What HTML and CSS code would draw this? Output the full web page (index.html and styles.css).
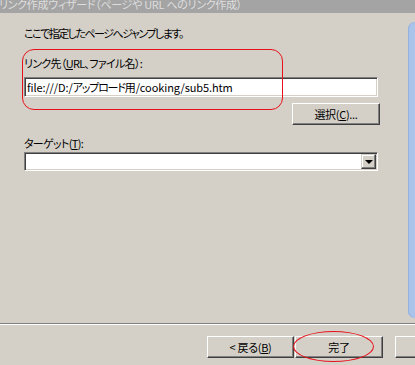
FILE: index.html
```html
<!DOCTYPE html>
<html lang="ja">
<head>
    <meta charset="UTF-8">
    <meta name="viewport" content="width=device-width, initial-scale=1.0">
    <title>リンク作成ウィザード</title>
    <link rel="stylesheet" href="styles.css">
</head>
<body>
    <div class="window">
        <div class="titlebar">
            <span>リンク作成ウィザード（ページや URL へのリンク作成）</span>
        </div>
        <div class="main">
            <div class="content">
                <p class="intro">ここで指定したページへジャンプします。</p>
                <label class="label first">リンク先（<u>U</u>RL、ファイル名）:</label>
                <div class="textbox">file:///D:/<span class="kana">アップロード</span>用/cooking/sub5.htm</div>
                <div class="button-row">
                    <button class="btn pick">選択(<u>C</u>)...</button>
                </div>
                <label class="label">ターゲット(<u>T</u>):</label>
                <div class="combo">
                    <span class="drop"><span class="arrow"></span></span>
                </div>
                <!-- 赤枠の注釈 -->
                <div class="mark-rect"></div>
            </div>
            <div class="side"></div>
        </div>
        <div class="footer">
            <button class="btn back">&lt; 戻る(<u>B</u>)</button>
            <button class="btn finish">完了</button>
            <button class="btn cancel"></button>
            <div class="mark-ellipse"></div>
        </div>
    </div>
</body>
</html>
```

FILE: styles.css
```css
body {
    margin: 0;
    background-color: #d4d0c8;
    font-family: "Noto Sans CJK JP", sans-serif;
    font-size: 11px;
    font-feature-settings: "palt";
    color: #000;
}
.window {
    width: 415px;
    height: 365px;
    overflow: hidden;
}
.titlebar {
    height: 13px;
    background-color: #a4a4a4;
    color: #dedede;
    overflow: hidden;
}
.titlebar span {
    display: block;
    margin-top: -4px;
    margin-left: -1px;
    line-height: 16px;
    letter-spacing: -0.3px;
    white-space: nowrap;
}
.main {
    display: flex;
    height: 310px;
}
.content {
    flex: 1;
    position: relative;
    padding: 13px 30px 0 24px;
}
.intro {
    margin: 0;
    line-height: 14px;
    letter-spacing: -1.5px;
}
.label {
    display: block;
    line-height: 14px;
    margin-top: 11px;
    letter-spacing: -0.7px;
}
.label.first {
    margin-top: 16px;
}
.textbox {
    margin-top: 7px;
    height: 20px;
    box-sizing: border-box;
    padding: 1px 2px 0;
    line-height: 16px;
    letter-spacing: -0.1px;
    background-color: #fff;
    border-style: solid;
    border-width: 1px;
    border-color: #808080 #fff #fff #808080;
    box-shadow: inset 1px 1px #404040, inset -1px -1px #d4d0c8;
    white-space: nowrap;
}
.kana {
    letter-spacing: -1.2px;
}
.button-row {
    display: flex;
    justify-content: flex-end;
    margin-top: 6px;
    margin-right: -2px;
}
.btn {
    flex-shrink: 0;
    height: 22px;
    box-sizing: border-box;
    padding: 0;
    font: inherit;
    letter-spacing: -0.3px;
    color: #000;
    background-color: #d4d0c8;
    border-style: solid;
    border-width: 1px;
    border-color: #fff #404040 #404040 #fff;
    box-shadow: inset -1px -1px #808080, inset 1px 1px #d4d0c8;
}
.pick {
    width: 88px;
}
.combo {
    margin-top: 2px;
    height: 19px;
    box-sizing: border-box;
    display: flex;
    justify-content: flex-end;
    padding: 1px;
    background-color: #fff;
    border-style: solid;
    border-width: 1px;
    border-color: #808080 #fff #fff #808080;
    box-shadow: inset 1px 1px #404040, inset -1px -1px #d4d0c8;
}
.drop {
    width: 15px;
    height: 15px;
    box-sizing: border-box;
    display: flex;
    align-items: center;
    justify-content: center;
    background-color: #d4d0c8;
    border-style: solid;
    border-width: 1px;
    border-color: #d4d0c8 #404040 #404040 #d4d0c8;
    box-shadow: inset -1px -1px #808080, inset 1px 1px #fff;
}
.arrow {
    width: 0;
    height: 0;
    border-left: 4px solid transparent;
    border-right: 4px solid transparent;
    border-top: 4px solid #000;
}
.side {
    width: 7px;
    margin: 9px 0 5px;
    background-color: #a9c3eb;
    border-radius: 8px 0 0 8px;
    box-shadow: inset 1px 0 #93b0de;
}
.footer {
    position: relative;
    display: flex;
    padding: 12px 0 0 207px;
    border-top: 1px solid #808080;
    box-shadow: inset 0 1px #fff;
}
.back {
    width: 87px;
}
.finish {
    width: 88px;
    margin-left: 1px;
}
.cancel {
    width: 88px;
    margin-left: 12px;
}
.mark-rect {
    position: absolute;
    left: 22px;
    top: 36px;
    width: 259px;
    height: 59px;
    border: 1px solid #e8101a;
    border-radius: 12px;
}
.mark-ellipse {
    position: absolute;
    left: 293px;
    top: 7px;
    width: 81px;
    height: 31px;
    box-sizing: border-box;
    border: 1px solid #e8101a;
    border-radius: 50%;
}
```
